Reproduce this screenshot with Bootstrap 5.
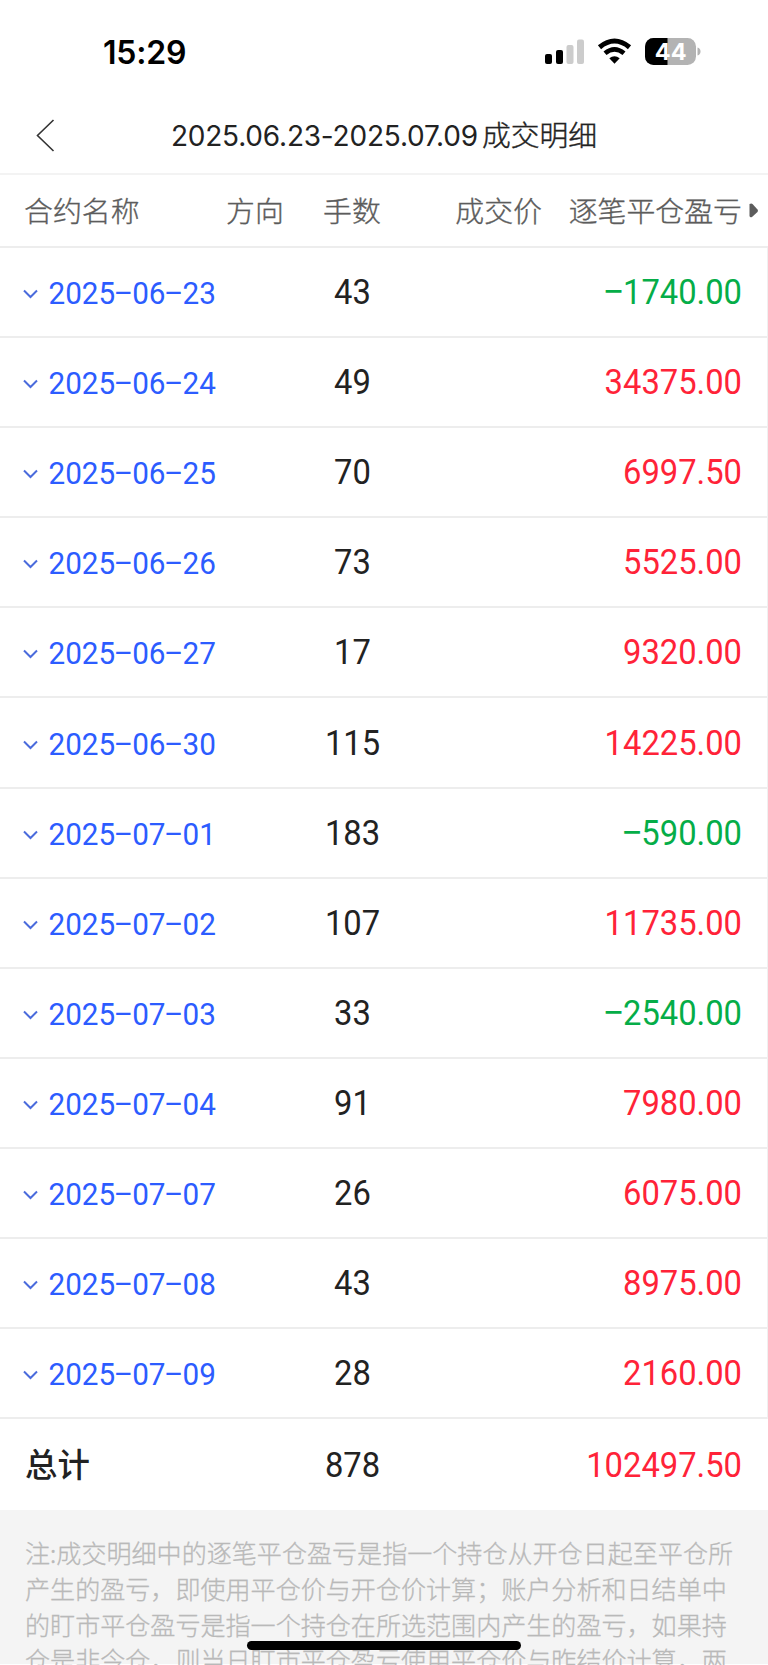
<!DOCTYPE html>
<html lang="zh-CN">
<head>
<meta charset="utf-8">
<meta name="viewport" content="width=device-width, initial-scale=1">
<title>成交明细</title>
<link href="https://cdn.jsdelivr.net/npm/bootstrap@5.3.0/dist/css/bootstrap.min.css" rel="stylesheet">
<style>
body{font-family:"Noto Sans CJK SC",sans-serif;color:#222;background:#fff}
.phone{width:768px;height:1665px}
.statusbar{height:102px;padding:0 66px 0 103px}
.clock{font:600 32px/40px Inter,sans-serif;color:#000;letter-spacing:-.2px;padding-top:33px}
.signals{margin-top:37px}
.titlebar{height:73px;border-bottom:2px solid #f3f3f3}
.back{position:absolute;left:35px;top:16px}
.title-text{font:400 28px/68px Inter,"Noto Sans CJK SC",sans-serif;letter-spacing:-.2px}
.title-cjk{font:300 28.8px "Noto Sans CJK SC",sans-serif;-webkit-text-stroke:.4px #222;margin-left:4px;letter-spacing:0}
.grid-row{display:grid;grid-template-columns:226px 90px 73px 153px 200px 26px;height:90.1px;align-items:center;border-bottom:2px solid #ededed}
.head-row{height:73px;font-size:28.9px;font-weight:300;color:#5c5c5c;-webkit-text-stroke:.35px #5c5c5c;white-space:nowrap;padding-bottom:2px}
.head-lots{padding-left:7px}
.lines{border-right:1px solid #f0f0f0}
.date{font:400 31.4px/40px Roboto,sans-serif;color:#2c5cff;transform:scaleX(.945);transform-origin:left;white-space:nowrap;padding:4px 0 0 .5px}
.chevron{margin:4px 1px 0 -1px}
.num{font:400 35.4px/44px Roboto,sans-serif;transform:scaleX(.925);transform-origin:center}
.amount{font:400 35.4px/44px Roboto,sans-serif;transform:scaleX(.925);transform-origin:right;white-space:nowrap}
.dash{display:inline-block;transform:scaleX(1.18)}
.up{color:#ff2338}.down{color:#05ad48}
.total-row{height:90.7px;border:0}
.total-name{font-size:32.4px;font-weight:500;padding:0 0 3px 25px}
.remark{height:154px;background:#f4f4f4;color:#b9b9b9;-webkit-text-stroke:.3px #b9b9b9;font-size:25.07px;line-height:35.8px;font-weight:300;padding:25px 25px 0;white-space:nowrap}
.home-bar{position:absolute;left:247px;top:1641px;width:274px;height:9px;border-radius:5px;background:#000}
</style>
</head>
<body>
<main class="phone position-relative overflow-hidden">
<header>
<div class="statusbar d-flex justify-content-between align-items-start">
<div class="clock">15:29</div>
<svg class="signals" width="158" height="30" viewBox="544 37 158 30">
<g><rect x="545" y="54" width="7" height="10" rx="2"/><rect x="556" y="50" width="7" height="14" rx="2"/><g fill="#ccc"><rect x="566.500" y="45" width="7" height="19" rx="2"/><rect x="577" y="39.500" width="7" height="24.500" rx="2"/></g></g>
<path d="M599.5 47.200Q614.500 34.800 629.500 47.200" fill="none" stroke="#000" stroke-width="5"/>
<path d="M605 53.300Q614.500 45.500 624 53.300" fill="none" stroke="#000" stroke-width="4.700"/>
<path d="M609.300 58.300Q614.500 54.200 619.700 58.300L614.500 63.800Z"/>
<rect x="645" y="38" width="51" height="27" rx="8.500" fill="#b3b3b3"/>
<path d="M667.500 38H653.500a8.500 8.500 0 0 0-8.500 8.500v10a8.500 8.500 0 0 0 8.500 8.500h14z"/>
<path d="M697.500 47.500q3 .8 3 4t-3 4z" fill="#b3b3b3"/>
<text x="670.700" y="60" text-anchor="middle" font-family="Inter" font-weight="700" font-size="23.500" fill="#fff">44</text>
</svg>
</div>
<div class="titlebar position-relative text-center">
<svg class="back" width="20" height="36" viewBox="0 0 20 36"><path d="M18.500 2L2.500 17.500l16 15.500" fill="none" stroke="#333" stroke-width="1.600"/></svg>
<div class="title-text">2025.06.23-2025.07.09<span class="title-cjk">成交明细</span></div>
</div>
</header>
<div class="grid-row head-row">
<div class="ps-4">合约名称</div><div>方向</div><div class="head-lots">手数</div><div class="text-end">成交价</div><div class="text-end">逐笔平仓盈亏</div>
<svg width="26" height="20"><path d="M7.500 4q2-1 3 0l5 5.500q1 1.300 0 2.600L10 17q-2 1-2.500-1z" fill="#5c5c5c"/></svg>
</div>
<div class="lines" id="rows"></div>
<div class="grid-row total-row"><div class="total-name">总计</div><div></div><div class="num text-center">878</div><div></div><div class="amount text-end up">102497.50</div></div>
<div class="remark">注:成交明细中的逐笔平仓盈亏是指一个持仓从开仓日起至平仓所<br>产生的盈亏，即使用平仓价与开仓价计算；账户分析和日结单中<br>的盯市平仓盈亏是指一个持仓在所选范围内产生的盈亏，如果持<br>仓是非今仓，则当日盯市平仓盈亏使用平仓价与昨结价计算，两</div>
<div class="home-bar"></div>
</main>
<script>
const days = [["06-23",43,"-1740.00"],["06-24",49,"34375.00"],["06-25",70,"6997.50"],["06-26",73,"5525.00"],["06-27",17,"9320.00"],["06-30",115,"14225.00"],["07-01",183,"-590.00"],["07-02",107,"11735.00"],["07-03",33,"-2540.00"],["07-04",91,"7980.00"],["07-07",26,"6075.00"],["07-08",43,"8975.00"],["07-09",28,"2160.00"]];
const dash = s => s.replace(/-/g, '<span class="dash">\u2212</span>');
document.getElementById("rows").innerHTML = days.map(([d,n,p]) => `<div class="grid-row"><div class="d-flex align-items-center ps-4"><svg width="24" height="12" class="chevron flex-shrink-0"><path d="M1 2.500l6.500 6.500 6.500-6.500" fill="none" stroke="#4a6bdc" stroke-width="2"/></svg><span class="date">${dash("2025-"+d)}</span></div><div></div><div class="num text-center">${n}</div><div></div><div class="amount text-end ${p[0]==="-"?"down":"up"}">${dash(p)}</div></div>`).join("");
</script>
<script src="https://cdn.jsdelivr.net/npm/bootstrap@5.3.0/dist/js/bootstrap.bundle.min.js"></script>
</body>
</html>
